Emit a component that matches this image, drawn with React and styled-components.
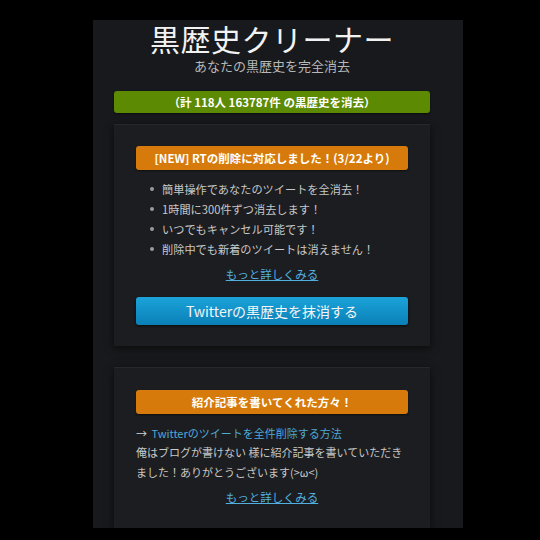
import styled, { createGlobalStyle } from 'styled-components';

const GlobalStyle = createGlobalStyle`
  html, body {
    margin: 0;
    padding: 0;
    background: #000;
  }
  body {
    font-family: "Noto Sans CJK JP", "Liberation Sans", sans-serif;
    color: #c8c8c8;
  }
`;

const Page = styled.div`
  width: 540px;
  height: 540px;
  overflow: hidden;
  padding: 20px 0 0 93px;
  box-sizing: border-box;
`;

const Container = styled.main`
  width: 370px;
  height: 508px;
  background: #17191c;
  padding: 0 33px 0 21px;
  box-sizing: border-box;
  display: flex;
  flex-direction: column;
`;

const Title = styled.h1`
  margin: 0;
  font-size: 30px;
  line-height: 37px;
  font-weight: 400;
  color: #f2f2f2;
  text-align: center;
  letter-spacing: 0.5px;
`;

const Subtitle = styled.p`
  margin: 0;
  font-size: 13px;
  line-height: 17px;
  color: #b8b8b8;
  text-align: center;
`;

const Banner = styled.div`
  height: 24px;
  border-radius: 3px;
  background: ${(p) => p.color};
  color: #fff;
  font-size: 11.5px;
  font-weight: 700;
  display: flex;
  align-items: center;
  justify-content: center;
  margin-top: ${(p) => p.top || 0}px;
  box-shadow: 0 1px 2px rgba(0, 0, 0, 0.5);
`;

const Card = styled.section`
  background: #1b1d20;
  border-top: 1px solid #26282c;
  box-shadow: 0 2px 8px rgba(0, 0, 0, 0.6);
  padding: ${(p) => p.pt}px 22px 21px 22px;
  margin-top: ${(p) => p.top}px;
  display: flex;
  flex-direction: column;
`;

const List = styled.ul`
  margin: 9px 0 0 0;
  padding: 0 0 0 26px;
  list-style: none;
`;

const Item = styled.li`
  position: relative;
  font-size: 11.2px;
  line-height: 20px;
  color: #c8c8c8;
  &::before {
    content: '';
    position: absolute;
    left: -12px;
    top: 8px;
    width: 4px;
    height: 4px;
    border-radius: 50%;
    background: #9a9a9a;
  }
`;

const More = styled.a`
  display: block;
  align-self: center;
  margin-top: ${(p) => p.top}px;
  font-size: 11.5px;
  line-height: 20px;
  color: #52b0e0;
  text-decoration: underline;
`;

const BigButton = styled.button`
  margin-top: 13px;
  height: 28px;
  border: none;
  border-radius: 3px;
  background: linear-gradient(#1ba3d9, #0a80b7);
  color: #f4f4f4;
  font-family: inherit;
  font-size: 14px;
  box-shadow: 0 1px 3px rgba(0, 0, 0, 0.6);
`;

const Line = styled.p`
  margin: ${(p) => p.top || 0}px 0 0 0;
  font-size: 11px;
  line-height: 19.5px;
  color: #c8c8c8;
  a {
    color: #4fa8d8;
    text-decoration: none;
  }
`;

const Arrow = styled.span`
  color: #d0d0d0;
  margin-right: 2px;
`;

export default function App() {
  return (
    <>
      <GlobalStyle />
      <Page>
        <Container>
          <Title>黒歴史クリーナー</Title>
          <Subtitle>あなたの黒歴史を完全消去</Subtitle>
          <Banner color="#5c8a02" top={17}>
            （計 118人 163787件 の黒歴史を消去）
          </Banner>

          <Card pt={21} top={11}>
            <Banner color="#d67b0b">[NEW] RTの削除に対応しました！(3/22より)</Banner>
            <List>
              <Item>簡単操作であなたのツイートを全消去！</Item>
              <Item>1時間に300件ずつ消去します！</Item>
              <Item>いつでもキャンセル可能です！</Item>
              <Item>削除中でも新着のツイートは消えません！</Item>
            </List>
            <More href="#" top={5}>もっと詳しくみる</More>
            <BigButton>Twitterの黒歴史を抹消する</BigButton>
          </Card>

          <Card pt={22} top={21}>
            <Banner color="#d67b0b">紹介記事を書いてくれた方々！</Banner>
            <Line top={10}>
              <Arrow>→</Arrow> <a href="#">Twitterのツイートを全件削除する方法</a>
            </Line>
            <Line>
              俺はブログが書けない 様に紹介記事を書いていただきました！ありがとうございます(&gt;ω&lt;)
            </Line>
            <More href="#" top={5}>もっと詳しくみる</More>
          </Card>
        </Container>
      </Page>
    </>
  );
}
